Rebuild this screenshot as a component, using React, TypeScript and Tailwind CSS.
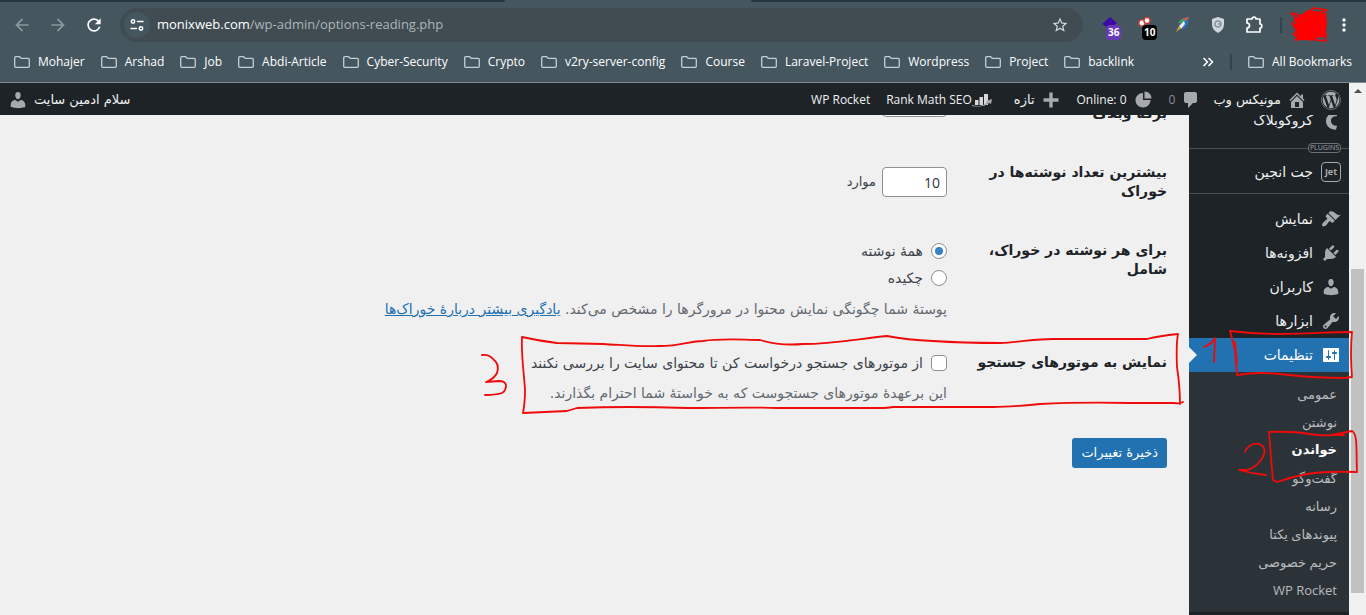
import type { ReactNode } from 'react'
import { FaWordpress } from 'react-icons/fa'
import { MdArrowBack, MdArrowForward, MdMoreVert, MdRefresh, MdStarBorder } from 'react-icons/md'

const BOOKMARKS = [
  'Mohajer',
  'Arshad',
  'Job',
  'Abdi-Article',
  'Cyber-Security',
  'Crypto',
  'v2ry-server-config',
  'Course',
  'Laravel-Project',
  'Wordpress',
  'Project',
  'backlink',
]

const DASHICONS = {
  appearance:
    'M14.48 11.06L7.41 3.99l1.5-1.5c.5-.56 2.3-.47 3.51.32 1.21.8 1.43 1.28 2.91 2.1 1.18.64 2.45 1.26 4.45.85zm-.71.71L6.7 4.7 4.93 6.47c-.39.39-.39 1.02 0 1.41l1.06 1.06c.39.39.39 1.03 0 1.42-.6.6-1.43 1.11-2.21 1.69-.35.26-.7.53-1.01.84C1.43 14.23.4 16.08 1.4 17.07c.99 1 2.84-.03 4.18-1.36.31-.31.58-.66.85-1.02.57-.78 1.08-1.61 1.69-2.21.39-.39 1.02-.39 1.41 0l1.06 1.06c.39.39 1.02.39 1.41 0z',
  plugins:
    'M13.11 4.36L9.87 7.6 8 5.73l3.24-3.24c.35-.34 1.05-.2 1.56.32.52.51.66 1.21.31 1.55zm-8 1.77l.91-1.12 9.01 9.01-1.19.84c-.71.71-2.63 1.16-3.82 1.16H6.14L4.9 17.26c-.59.59-1.54.59-2.12 0-.59-.58-.59-1.53 0-2.12l1.24-1.24v-3.88c0-1.13.4-3.19 1.09-3.89zm7.26 3.97l3.24-3.24c.34-.35 1.04-.21 1.55.31.52.51.66 1.21.31 1.55l-3.24 3.25z',
  users:
    'M10 9.25c-2.27 0-2.73-3.44-2.73-3.44C7 4.02 7.82 2 9.97 2c2.16 0 2.98 2.02 2.71 3.81 0 0-.41 3.44-2.68 3.44zm0 2.57L12.72 10c2.39 0 4.52 2.33 4.52 4.53v2.49s-3.65 1.13-7.24 1.13c-3.65 0-7.24-1.13-7.24-1.13v-2.49c0-2.25 1.94-4.48 4.47-4.48z',
  tools:
    'M16.68 9.77c-1.34 1.34-3.3 1.67-4.95.99l-5.41 6.52c-.99.99-2.59.99-3.58 0s-.99-2.59 0-3.57l6.52-5.42c-.68-1.65-.35-3.61.99-4.95 1.28-1.28 3.12-1.62 4.72-1.06l-2.89 2.89 2.82 2.82 2.86-2.87c.53 1.58.18 3.39-1.08 4.65zM3.81 16.21c.4.39 1.04.39 1.43 0 .4-.4.4-1.04 0-1.43-.39-.4-1.03-.4-1.43 0-.39.39-.39 1.03 0 1.43z',
  settings:
    'M18 16V4c0-.55-.45-1-1-1H3c-.55 0-1 .45-1 1v12c0 .55.45 1 1 1h14c.55 0 1-.45 1-1zM8 11h1c.55 0 1 .45 1 1s-.45 1-1 1H8v1.5c0 .28-.22.5-.5.5s-.5-.22-.5-.5V13H6c-.55 0-1-.45-1-1s.45-1 1-1h1V5.5c0-.28.22-.5.5-.5s.5.22.5.5V11zm5-2h-1c-.55 0-1-.45-1-1s.45-1 1-1h1V5.5c0-.28.22-.5.5-.5s.5.22.5.5V7h1c.55 0 1 .45 1 1s-.45 1-1 1h-1v5.5c0 .28-.22.5-.5.5s-.5-.22-.5-.5V9z',
  home: 'M16 8.5l1.53 1.53-1.06 1.06L10 4.6l-6.47 6.49-1.06-1.06L10 2.5l4 4v-2h2v4zm-6-2.46l6 5.99V18H4v-5.97zM12 17v-5H8v5h4z',
  comments: 'M5 2h9c1.1 0 2 .9 2 2v7c0 1.1-.9 2-2 2h-2l-5 5v-5H5c-1.1 0-2-.9-2-2V4c0-1.1.9-2 2-2z',
  plus: 'M17.500 8.300v3.400h-5.800v5.800H8.300v-5.800H2.500V8.300h5.800V2.500h3.400v5.800z',
  pie: 'M11.500 8.500V1.500c4 0 7 3 7 7zM10 3v7h7.500c0 4-3.300 7.500-7.500 7.500S2.500 14 2.500 10.300 5.800 3 10 3z',
  croco: 'M14 2.500A8.500 8.500 0 0 0 5 11c0 5 4 8.500 10 8.800l1-4c-3.500 0-6-1.800-6-5 0-2 1-3.300 2.300-4l3.700-.800V2.500z',
}

type IconName = keyof typeof DASHICONS

const MENU: { label: string; icon: IconName }[] = [
  { label: 'نمایش', icon: 'appearance' },
  { label: 'افزونه‌ها', icon: 'plugins' },
  { label: 'کاربران', icon: 'users' },
  { label: 'ابزارها', icon: 'tools' },
]

const SUBMENU = ['عمومی', 'نوشتن', 'خواندن', 'گفت‌وگو', 'رسانه', 'پیوندهای یکتا', 'حریم خصوصی', 'WP Rocket']

function Dashicon({ name, className = 'fill-[#a7aaad]' }: { name: IconName; className?: string }) {
  return (
    <svg viewBox="0 0 20 20" className={`size-5 shrink-0 ${className}`} aria-hidden="true">
      <path fillRule="evenodd" d={DASHICONS[name]} />
    </svg>
  )
}

function Folder() {
  return (
    <svg viewBox="0 0 16 12" className="h-3 w-4 shrink-0" fill="none" stroke="#c3ced6" strokeWidth="1.300" aria-hidden="true">
      <path d="M.7 1.700a1 1 0 0 1 1-1h3.900l1.700 1.700h7a1 1 0 0 1 1 1v6.900a1 1 0 0 1-1 1H1.700a1 1 0 0 1-1-1z" />
    </svg>
  )
}

function Bookmark({ label }: { label: string }) {
  return (
    <a href="#" className="flex items-center gap-2 whitespace-nowrap">
      <Folder />
      {label}
    </a>
  )
}

function Extensions() {
  return (
    <div className="flex items-center gap-3">
      <button type="button" aria-label="Extension, 36" className="relative size-6">
        <svg viewBox="0 0 24 24" className="size-6" aria-hidden="true">
          <path d="M12 4l7 6-7 6-8-5z" fill="#3a0ca3" />
        </svg>
        <span className="absolute top-3 left-2 rounded-sm bg-[#673ab7] px-0.5 text-[10px] leading-[15px] font-bold">36</span>
      </button>
      <button type="button" aria-label="Extension, 10" className="relative size-6">
        <svg viewBox="0 0 24 24" className="size-6" aria-hidden="true">
          <circle cx="8" cy="10" r="3.200" fill="#fff" stroke="#c2463c" strokeWidth="1.500" />
          <circle cx="13" cy="7.500" r="3" fill="#fff" stroke="#c2463c" strokeWidth="1.500" />
        </svg>
        <span className="absolute top-3 left-2 rounded-sm bg-black px-0.5 text-[10px] leading-[15px] font-bold">10</span>
      </button>
      <button type="button" aria-label="Feather" className="size-6">
        <svg viewBox="0 0 24 24" className="size-6" aria-hidden="true">
          <path d="M8 10c1-3 5-5 11-6l-5 7z" fill="#3f9a6b" />
          <path d="M12 6l7-2-2 4z" fill="#e2574c" />
          <path d="M12 11l7-6c0 5-2 9-6 11z" fill="#2d6fb9" />
          <path d="M9 13l5-5 1 3-4 5z" fill="#e8eef2" />
          <path d="M6 19l3-6 2 2z" fill="#e0a43c" />
        </svg>
      </button>
      <button type="button" aria-label="Shield" className="size-6">
        <svg viewBox="0 0 24 24" className="size-6" aria-hidden="true">
          <path d="M12 4l6 2v5c0 4-2 7-6 9-4-2-6-5-6-9V6z" fill="#cfd6dc" />
          <circle cx="12" cy="11" r="3" fill="none" stroke="#8795a3" strokeWidth="1.500" />
          <path d="M12 11h3" stroke="#8795a3" strokeWidth="1.500" />
        </svg>
      </button>
      <button type="button" aria-label="Extensions" className="size-6">
        <svg viewBox="0 0 24 24" className="size-6" fill="none" stroke="#fff" strokeWidth="1.700" strokeLinejoin="round" aria-hidden="true">
          <path d="M5 6h5a2 1.800 0 0 1 4 0h4v5a1.800 2 0 0 1 0 4v4H5v-4a2.500 2.500 0 0 0 0-5z" />
        </svg>
      </button>
    </div>
  )
}

function BrowserChrome() {
  return (
    <header className="shrink-0 border-b border-[#7c8b92] bg-[#45565f] font-['Open_Sans',sans-serif] text-white">
      <div className="flex h-0.5 justify-between">
        <span className="w-[37%] rounded-br bg-[#27363e]" />
        <span className="w-[45%] rounded-bl bg-[#27363e]" />
      </div>
      <div className="flex h-[46px] items-center pr-4 pl-3">
        <nav className="flex items-center gap-4 pr-4">
          <button type="button" aria-label="Back" className="text-[#8b989f]">
            <MdArrowBack className="size-5" />
          </button>
          <button type="button" aria-label="Forward" className="text-[#8b989f]">
            <MdArrowForward className="size-5" />
          </button>
          <button type="button" aria-label="Reload">
            <MdRefresh className="size-5" />
          </button>
        </nav>
        <div className="flex h-[34px] flex-1 items-center rounded-full bg-[#404c52] pr-3.5 pl-1">
          <button type="button" aria-label="Site information" className="flex size-[26px] items-center justify-center rounded-full bg-[#46565e]">
            <svg viewBox="0 0 14 14" className="size-3.5" fill="none" stroke="#fff" strokeWidth="1.500" strokeLinecap="round" aria-hidden="true">
              <circle cx="3" cy="3.500" r="1.700" />
              <path d="M7.500 3.500H13M1 10.500h5.500" />
              <circle cx="11" cy="10.500" r="1.700" />
            </svg>
          </button>
          <p className="ml-[7px] flex-1 text-[13px] text-[#aab4b9]">
            <span className="text-white">monixweb.com</span>/wp-admin/options-reading.php
          </p>
          <button type="button" aria-label="Bookmark this tab" className="text-[#d3dadd]">
            <MdStarBorder className="size-[18px]" />
          </button>
        </div>
        <div className="flex items-center pl-[15px]">
          <Extensions />
          <span className="ml-3.5 h-4 w-0.5 bg-[#33434b]" />
          <svg viewBox="0 0 40 36" className="ml-2 h-9 w-10" aria-hidden="true">
            <g fill="none" stroke="#fe0000" strokeWidth="1.600" strokeLinejoin="round" strokeLinecap="round">
              <path d="M5 12l6-3 7-5 9 1 7 3 2 7-1 8 1 6-9 1-7 3-8-2-5-3 2-4-5-4 3-5z" fill="#fe0000" />
              <path d="M1 6l12 3L24 1l13 2-9 3 8 2M1 6l6 6-5 4 5 6-3 6 5 3-4 2 12-1 19 2-1-8 1-9-1-14M2 17l5 3M3 27l6-3M10 32l25-4" />
            </g>
          </svg>
          <button type="button" aria-label="Menu" className="-mr-1 ml-1">
            <MdMoreVert className="size-5" />
          </button>
        </div>
      </div>
      <div className="flex h-[34px] items-center pr-3.5 pb-1.5 pl-3.5 text-xs">
        <nav className="flex items-center gap-4">
          {BOOKMARKS.map((label) => (
            <Bookmark key={label} label={label} />
          ))}
        </nav>
        <button type="button" aria-label="More bookmarks" className="ml-auto">
          <svg viewBox="0 0 12 10" className="h-2.5 w-3" fill="none" stroke="#fff" strokeWidth="1.500" aria-hidden="true">
            <path d="M1.500 1l4 4-4 4M6.500 1l4 4-4 4" />
          </svg>
        </button>
        <span className="mr-4 ml-4 h-4 w-0.5 bg-[#33434b]" />
        <Bookmark label="All Bookmarks" />
      </div>
    </header>
  )
}

function AdminBar() {
  return (
    <div className="flex h-8 shrink-0 items-center bg-[#1d2327] px-2 pt-0.5 text-[13px] whitespace-nowrap text-[#f0f0f1]">
      <a href="#" aria-label="WordPress">
        <FaWordpress className="size-5 text-[#a7aaad]" />
      </a>
      <a href="#" className="mr-3.5 flex items-center gap-1.5">
        <Dashicon name="home" />
        مونیکس وب
      </a>
      <a href="#" className="mr-3 flex items-center gap-1.5 text-[#8c8f94]">
        <Dashicon name="comments" />
        <span className="font-['Open_Sans',sans-serif] text-xs">0</span>
      </a>
      <a href="#" className="mr-4 flex items-center gap-1.5">
        <Dashicon name="pie" />
        <bdi className="font-['Open_Sans',sans-serif] text-xs">Online: 0</bdi>
      </a>
      <a href="#" className="mr-4 flex items-center gap-1.5">
        <Dashicon name="plus" />
        تازه
      </a>
      <a href="#" className="mr-[22px] flex items-center font-['Open_Sans',sans-serif] text-xs">
        <svg viewBox="0 0 20 14" className="h-3.5 w-5" aria-hidden="true">
          <path d="M3 7h3.500v5H3zM7.500 4H11v8H7.500zM12 1h4v11h-4z" fill="#d5d7d9" />
          <path d="M0 12c6 2 12 1 15-3l-1-1 6-2-1 5-2-1c-4 4-11 4-17 3z" fill="#a7aaad" />
        </svg>
        Rank Math SEO
      </a>
      <a href="#" className="mr-4 font-['Open_Sans',sans-serif] text-xs">
        WP Rocket
      </a>
      <a href="#" className="mr-auto flex flex-row-reverse items-center gap-1.5">
        <Dashicon name="users" />
        سلام ادمین سایت
      </a>
    </div>
  )
}

function MenuLink({ children, icon, className = 'h-[34px]' }: { children: ReactNode; icon: ReactNode; className?: string }) {
  return (
    <a href="#" className={`flex items-center ${className}`}>
      <span className="flex w-9 justify-center">{icon}</span>
      {children}
    </a>
  )
}

function Sidebar() {
  return (
    <aside className="w-40 shrink-0 bg-[#1d2327] text-sm text-[#f0f0f1]">
      {/* scrolled: the first entry sits partly under the admin bar */}
      <nav className="-mt-3">
        <MenuLink icon={<Dashicon name="croco" />}>کروکوبلاک</MenuLink>
        <div className="flex h-[22px] items-center">
          <span className="h-px w-2 bg-[#4b5055]" />
          <span className="rounded-sm border border-[#6a6f74] px-px font-['Open_Sans',sans-serif] text-[7px] leading-2 text-[#a7aaad]">PLUGINS</span>
          <span className="h-px flex-1 bg-[#4b5055]" />
        </div>
        <MenuLink
          className="h-[26px]"
          icon={
            <span className="flex size-5 items-center justify-center rounded-sm border border-[#a7aaad] font-['Open_Sans',sans-serif] text-[9px] font-bold text-[#a7aaad]">
              Jet
            </span>
          }
        >
          جت انجین
        </MenuLink>
        <div className="flex h-[17px] items-center">
          <span className="h-px flex-1 bg-[#4b5055]" />
        </div>
        {MENU.map((item) => (
          <MenuLink key={item.label} icon={<Dashicon name={item.icon} />}>
            {item.label}
          </MenuLink>
        ))}
        <div className="relative bg-[#2271b1] text-white">
          <MenuLink icon={<Dashicon name="settings" className="fill-white" />}>تنظیمات</MenuLink>
          <span className="absolute top-[9px] left-0 border-y-8 border-l-8 border-y-transparent border-l-[#f0f0f1]" />
        </div>
        <ul className="bg-[#2c3338] px-3 py-2 text-[13px] text-[#b8bbbe]">
          {SUBMENU.map((label) => (
            <li key={label}>
              <a
                href="#"
                className={
                  label === 'خواندن'
                    ? 'flex h-7 items-center font-bold text-white'
                    : "flex h-7 items-center font-['Open_Sans','DejaVu_Sans',sans-serif]"
                }
              >
                {label}
              </a>
            </li>
          ))}
        </ul>
      </nav>
    </aside>
  )
}

function Row({ label, htmlFor, className, children }: { label: string; htmlFor?: string; className: string; children: ReactNode }) {
  return (
    <div className={`flex ${className}`}>
      <label htmlFor={htmlFor} className="w-[220px] shrink-0 pl-10 text-sm leading-[19px] font-bold text-[#1d2327]">
        {label}
      </label>
      {children}
    </div>
  )
}

const FIELD = "h-[30px] w-[65px] rounded border border-[#8c8f94] bg-white px-1.5 font-['Open_Sans',sans-serif] text-sm text-[#2c3338]"
const RADIO =
  "flex size-4 appearance-none items-center justify-center rounded-full border border-[#8c8f94] bg-white before:size-2 before:rounded-full checked:before:bg-[#3582c4] checked:before:content-['']"

function ReadingForm() {
  return (
    <main className="min-w-0 flex-1 overflow-hidden pr-[22px] text-sm text-[#3c434a]">
      <form className="-mt-7 flex flex-col">
        <Row label="برگه وبلاگ" htmlFor="posts" className="h-9 items-end">
          <input id="posts" type="text" defaultValue="10" className={`self-start ${FIELD}`} />
        </Row>
        <Row label="بیشترین تعداد نوشته‌ها در خوراک" htmlFor="feed" className="mt-10 items-center">
          <div className="flex items-center gap-1.5 text-[13px]">
            <input id="feed" type="text" defaultValue="10" className={FIELD} />
            موارد
          </div>
        </Row>
        <Row label="برای هر نوشته در خوراک، شامل" className="mt-10">
          <div className="leading-5">
            <label className="flex items-center gap-2">
              <input type="radio" name="rss" defaultChecked className={RADIO} />
              همهٔ نوشته
            </label>
            <label className="mt-[7px] flex items-center gap-2">
              <input type="radio" name="rss" className={RADIO} />
              چکیده
            </label>
            <p className="mt-[11px] text-[#646970]">
              پوستهٔ شما چگونگی نمایش محتوا در مرورگرها را مشخص می‌کند.{' '}
              <a href="#" className="text-[#2271b1] underline">
                یادگیری بیشتر دربارهٔ خوراک‌ها
              </a>
            </p>
          </div>
        </Row>
        <div className="mt-[34px] flex">
          <h3 className="w-[220px] shrink-0 text-sm leading-[19px] font-bold text-[#1d2327]">نمایش به موتورهای جستجو</h3>
          <div className="leading-5">
            <label className="flex items-center gap-2">
              <input type="checkbox" className="size-4 appearance-none rounded border border-[#8c8f94] bg-white" />
              از موتورهای جستجو درخواست کن تا محتوای سایت را بررسی نکنند
            </label>
            <p className="mt-2.5 text-[#646970]">این برعهدهٔ موتورهای جستجوست که به خواستهٔ شما احترام بگذارند.</p>
          </div>
        </div>
        <button type="submit" className="mt-[35px] h-[30px] self-start rounded-[3px] bg-[#2271b1] px-[9px] text-[13px] text-white">
          ذخیرهٔ تغییرات
        </button>
      </form>
    </main>
  )
}

function Scrollbar() {
  return (
    <div className="flex w-[17px] shrink-0 flex-col items-center bg-[#f1f1f1]">
      <span className="mt-1.5 border-x-4 border-b-4 border-x-transparent border-b-[#505050]" />
      <span className="mt-44 mb-[22px] w-[13px] flex-1 bg-[#c1c1c1]" />
    </div>
  )
}

// Hand-drawn step markers laid over the window
function Markers() {
  return (
    <svg
      viewBox="0 0 1366 615"
      className="pointer-events-none absolute top-0 right-0 h-[615px] w-[1366px]"
      fill="none"
      stroke="#f00a0a"
      strokeWidth="1.800"
      strokeLinecap="round"
      strokeLinejoin="round"
      aria-hidden="true"
    >
      <path d="M1204 347q8-3 11-9l-1 24" />
      <path d="M1230 331q25 3 50 3c30 0 45-2 72-2q-2 20 0 45l-8 1c-30 0-45-2-65-4-18-2-30-1-42 1l-2-25q-2-8-5-19M1235 342l2 22" />
      <path d="M1245 452c3-8 14-12 19-4 3 8-8 20-17 22l-8 0q14 4 27 5" />
      <path d="M1269 432q24-1 40 2 14 2 22 1l13 0M1331 435q12-2 21-4c6 3 4 20 5 41q-30-1-50 2-16 3-30 8l-4-2q-2-20-4-48" />
      <path d="M482 355q7-1 11 4 7 5 4 14-3 6-11 9l13-1q6 0 7 4 0 6-4 8-6 2-17 2" />
      <path d="M522 337q18 4 35 6l46 1c20 1 36 3 57 2 20 0 30-5 43-5 20-3 40-1 57-1q20 6 43 4c30 0 54-5 84-8q20 4 46 5c30 2 48 2 67 2 20-1 36-4 53-4h94q12-3 31-5-2 10-1 33 3 20 3 37M1183 402q-3 2-9 1h-44q-50-1-90 1c-20 2-32 3-47 3h-100q-6 1-10 1H777c-30-1-60 0-90 0q-60-2-110 0l-10 3q-20 1-44 2 2-10 2-23c-1-18-4-35-3-53" />
    </svg>
  )
}

export default function App() {
  return (
    <div className="relative flex h-screen flex-col overflow-hidden bg-[#f0f0f1]">
      <BrowserChrome />
      <div className="flex min-h-0 flex-1">
        <div dir="rtl" lang="fa" className="flex min-w-0 flex-1 flex-col font-['DejaVu_Sans',sans-serif]">
          <AdminBar />
          <div className="flex min-h-0 flex-1 overflow-hidden">
            <Sidebar />
            <ReadingForm />
          </div>
        </div>
        <Scrollbar />
      </div>
      <Markers />
    </div>
  )
}
